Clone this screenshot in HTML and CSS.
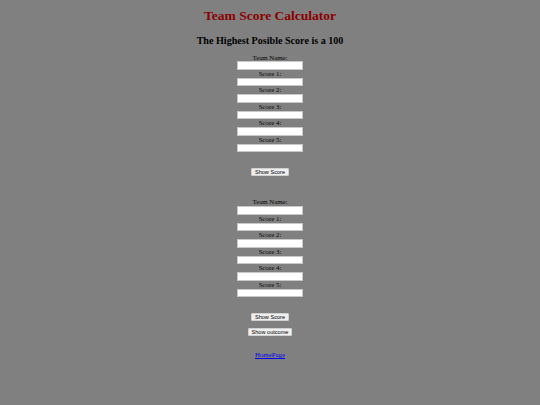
FILE: index.html
```html
<!DOCTYPE html>
<html>
<head>
<meta charset="utf-8">
<title>Team Score Calculator</title>
<link rel="stylesheet" href="styles.css">
</head>
<body>
<div class="page">
  <h1 class="title">Team Score Calculator</h1>
  <h2 class="subtitle">The Highest Posible Score is a 100</h2>

  <form class="team-form">
    <label class="field-label">Team Name:</label>
    <input class="field" type="text">
    <label class="field-label">Score 1:</label>
    <input class="field" type="text">
    <label class="field-label">Score 2:</label>
    <input class="field" type="text">
    <label class="field-label">Score 3:</label>
    <input class="field" type="text">
    <label class="field-label">Score 4:</label>
    <input class="field" type="text">
    <label class="field-label">Score 5:</label>
    <input class="field" type="text">
    <button class="btn btn-first" type="button">Show Score</button>
  </form>

  <form class="team-form second">
    <label class="field-label">Team Name:</label>
    <input class="field" type="text">
    <label class="field-label">Score 1:</label>
    <input class="field" type="text">
    <label class="field-label">Score 2:</label>
    <input class="field" type="text">
    <label class="field-label">Score 3:</label>
    <input class="field" type="text">
    <label class="field-label">Score 4:</label>
    <input class="field" type="text">
    <label class="field-label">Score 5:</label>
    <input class="field" type="text">
    <button class="btn btn-first" type="button">Show Score</button>
    <button class="btn btn-next" type="button">Show outcome</button>
  </form>

  <a class="home-link" href="#">HomePage</a>
</div>
</body>
</html>
```

FILE: styles.css
```css
html, body {
  margin: 0;
  padding: 0;
}

body {
  background: #808080;
  font-family: "Liberation Serif", "Times New Roman", serif;
  color: #000;
  width: 540px;
  height: 405px;
  overflow: hidden;
}

.page {
  display: flex;
  flex-direction: column;
  align-items: center;
}

.title {
  margin: 8px 0 0;
  font-size: 13.5px;
  line-height: 16px;
  font-weight: bold;
  color: #8b0000;
}

.subtitle {
  margin: 11px 0 0;
  font-size: 10.1px;
  line-height: 12px;
  font-weight: bold;
}

.team-form {
  display: flex;
  flex-direction: column;
  align-items: center;
  margin-top: 6.5px;
}

.team-form.second {
  margin-top: 22.5px;
}

.field-label {
  font-size: 6.85px;
  line-height: 7.8px;
  height: 7.8px;
}

.field {
  box-sizing: border-box;
  width: 66px;
  height: 8.7px;
  margin: 0;
  padding: 0;
  border: 0.5px solid #c8c8c8;
  background: #fff;
}

.btn {
  box-sizing: border-box;
  height: 8px;
  margin: 0;
  padding: 0 2.5px;
  font-family: "Liberation Sans", Arial, sans-serif;
  font-size: 5.6px;
  line-height: 7px;
  color: #000;
  background: #efefef;
  border: 0.5px solid #d0d0d0;
  border-radius: 1px;
}

.btn-first {
  margin-top: 15.5px;
}

.btn-next {
  margin-top: 7.6px;
}

.home-link {
  margin-top: 15px;
  font-size: 6.85px;
  line-height: 7.8px;
  color: #0000ee;
  text-decoration: underline;
}
```
